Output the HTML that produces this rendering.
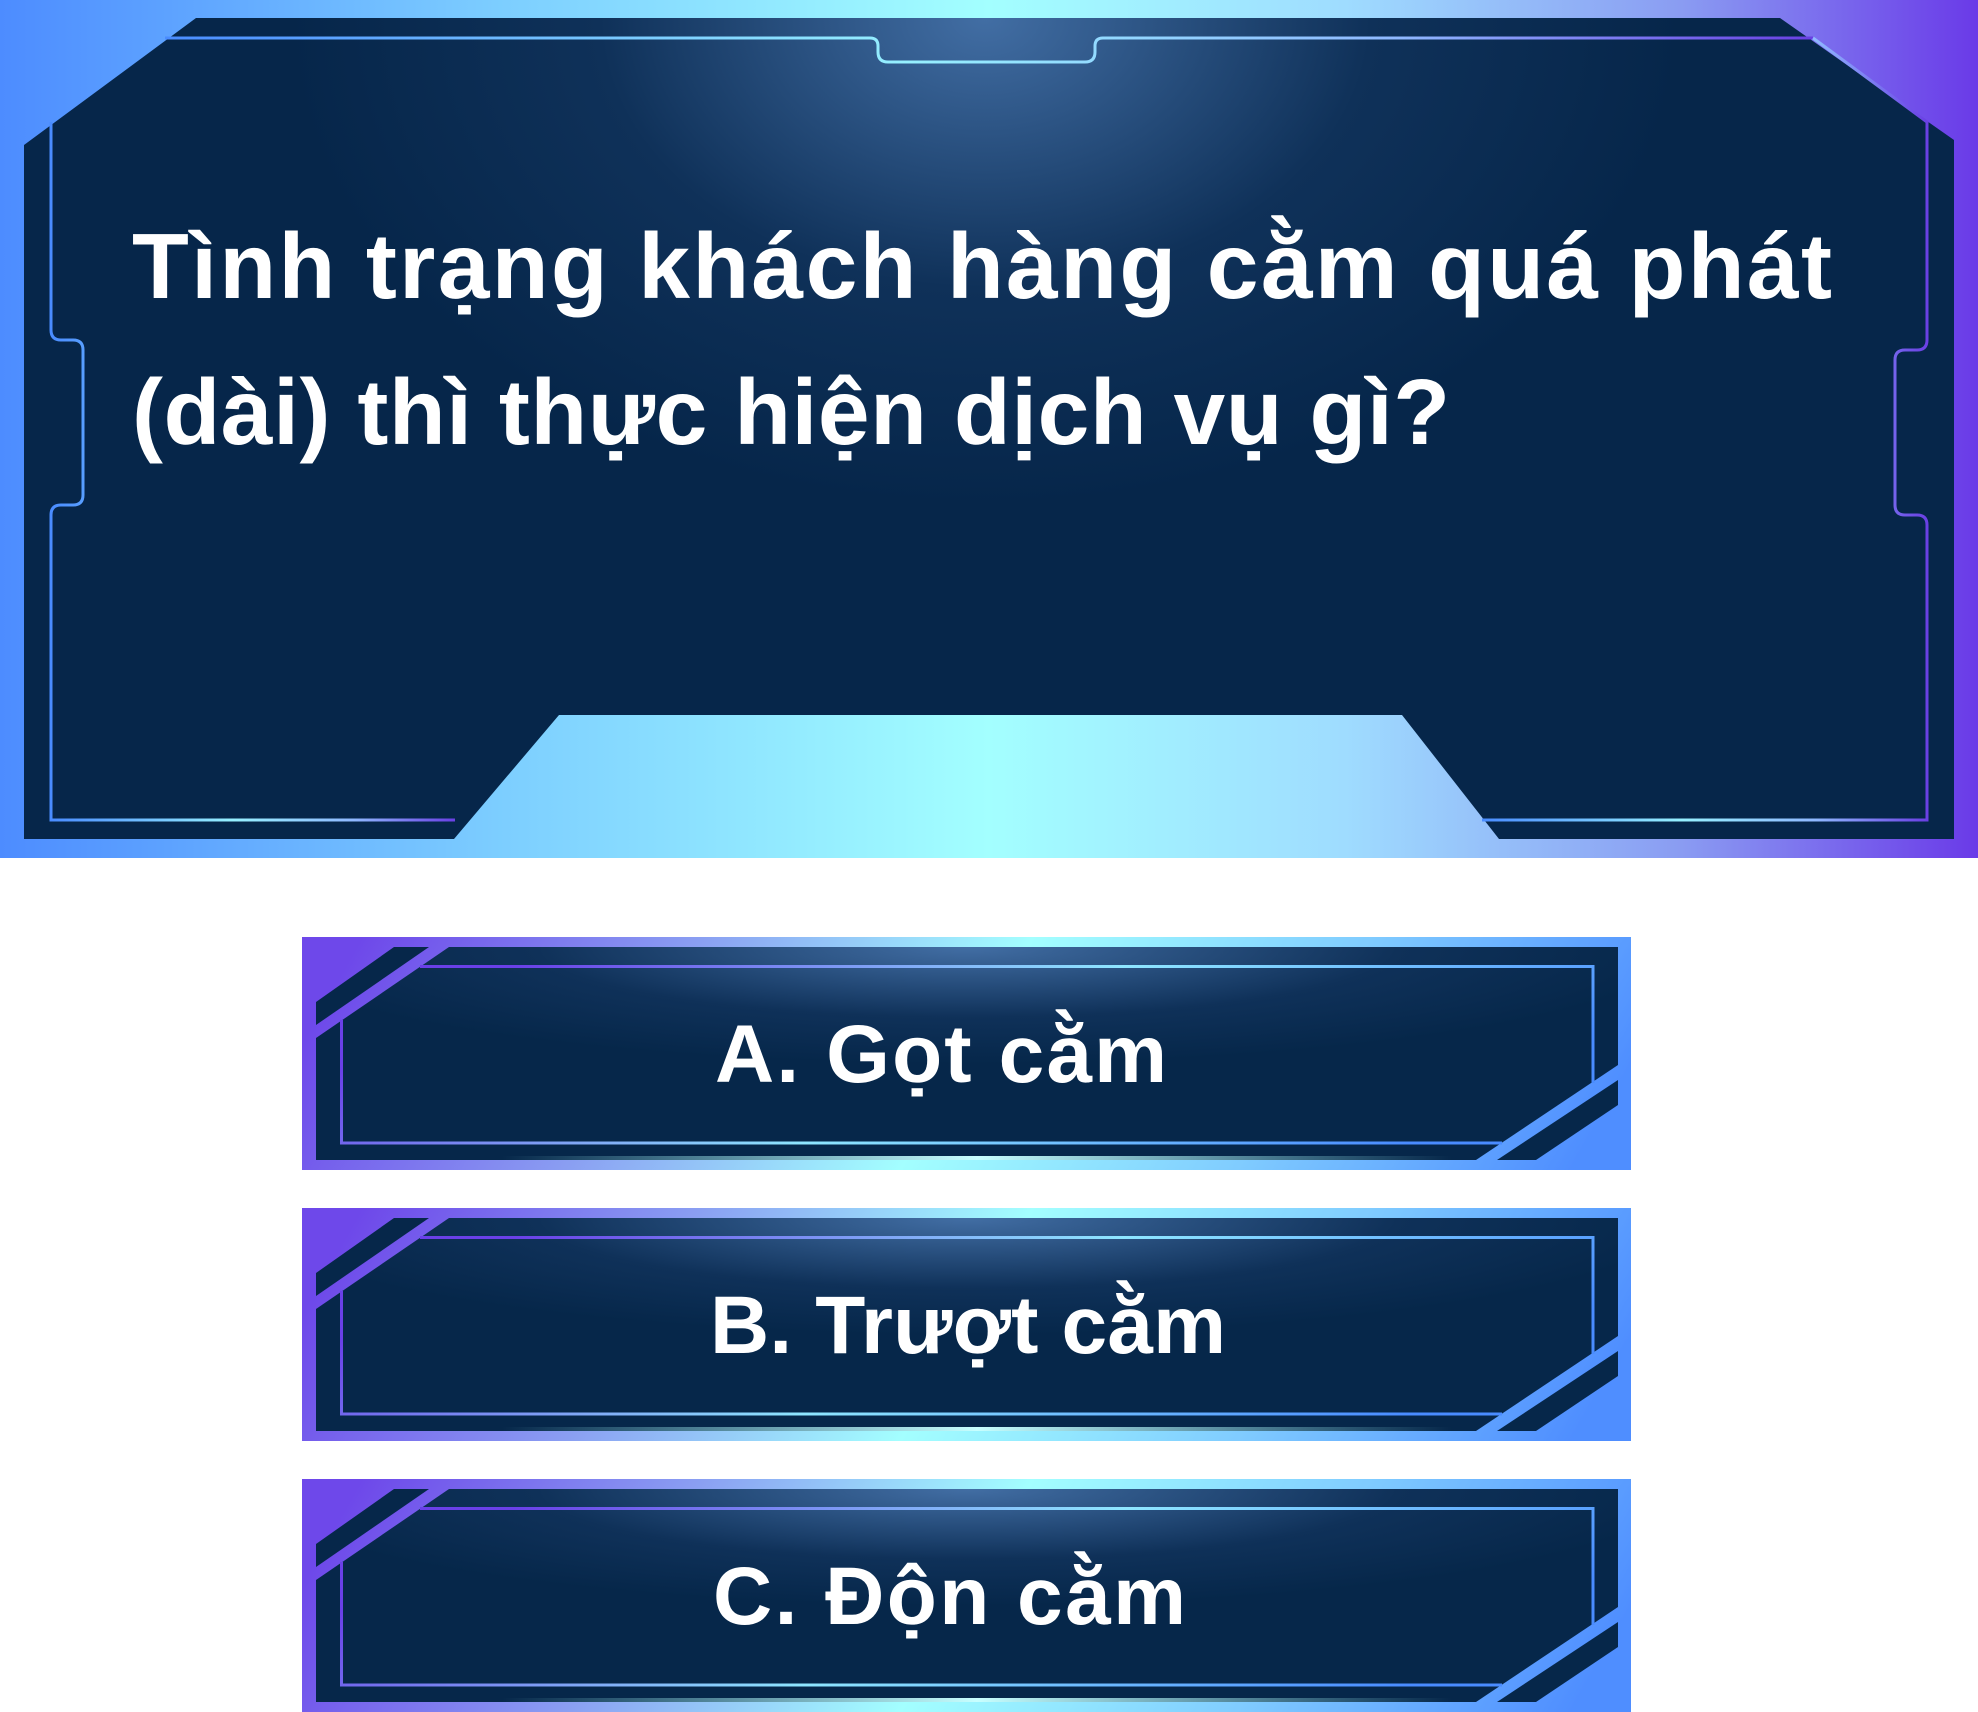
<!DOCTYPE html>
<html><head><meta charset="utf-8"><style>
html,body{margin:0;padding:0;background:#fff;width:1978px;height:1712px;overflow:hidden}
svg{display:block}
text{font-family:"Liberation Sans",sans-serif;font-weight:bold;fill:#fff}
</style></head><body>
<svg width="1978" height="1712" viewBox="0 0 1978 1712" xmlns="http://www.w3.org/2000/svg">
<defs>
<linearGradient id="topg" x1="0" y1="0" x2="1" y2="0">
<stop offset="0" stop-color="#4d8cff"/><stop offset="0.25" stop-color="#7ccdff"/>
<stop offset="0.5" stop-color="#a3ffff"/><stop offset="0.68" stop-color="#9fdcff"/>
<stop offset="0.85" stop-color="#8a9cf2"/><stop offset="1" stop-color="#6a3ae8"/>
</linearGradient>
<radialGradient id="qdark" cx="985" cy="18" r="700" gradientUnits="userSpaceOnUse" gradientTransform="translate(985 18) scale(1 0.7) translate(-985 -18)">
<stop offset="0" stop-color="#426ea4"/><stop offset="0.55" stop-color="#0f3159"/><stop offset="1" stop-color="#06264a"/>
</radialGradient>
<linearGradient id="qline" x1="0" y1="0" x2="1" y2="0">
<stop offset="0" stop-color="#4a8cff"/><stop offset="0.45" stop-color="#96f0ff"/>
<stop offset="0.75" stop-color="#8fb8ff"/><stop offset="1" stop-color="#6a40e4"/>
</linearGradient>
<linearGradient id="ag" x1="0" y1="0.45" x2="1" y2="0.55">
<stop offset="0" stop-color="#6e48ea"/><stop offset="0.25" stop-color="#8a9ef2"/>
<stop offset="0.5" stop-color="#a3ffff"/><stop offset="0.75" stop-color="#80ccff"/>
<stop offset="1" stop-color="#4f8eff"/>
</linearGradient>
<radialGradient id="adark" cx="0.5" cy="0" r="0.55">
<stop offset="0" stop-color="#426ea4"/><stop offset="0.6" stop-color="#0f3159"/><stop offset="1" stop-color="#06274a"/>
</radialGradient>
<linearGradient id="aline" x1="0" y1="0.4" x2="1" y2="0.6">
<stop offset="0" stop-color="#6a40e8"/><stop offset="0.5" stop-color="#8ee6ff"/><stop offset="1" stop-color="#4a8cff"/>
</linearGradient>
<linearGradient id="glow" x1="0" y1="0" x2="1" y2="0">
<stop offset="0" stop-color="#a3ffff" stop-opacity="0"/><stop offset="0.5" stop-color="#c8ffff"/><stop offset="1" stop-color="#a3ffff" stop-opacity="0"/>
</linearGradient>
<g id="box">
<rect x="0" y="0" width="1329" height="233" fill="url(#ag)"/>
<polygon points="92,10 127,10 14,88 14,65" fill="#06274a"/>
<polygon points="147,10 1316,10 1316,128 1174,223 14,223 14,101" fill="url(#adark)"/>
<polygon points="1316,143 1316,168 1234,223 1195,223" fill="#06274a"/>
<polyline points="118,29.5 1291,29.5 1291,146" fill="none" stroke="url(#aline)" stroke-width="3"/>
<polyline points="1200,206 39.5,206 39.5,83" fill="none" stroke="url(#aline)" stroke-width="3"/>
<rect x="200" y="219" width="950" height="4" fill="url(#glow)"/>
</g>
</defs>
<rect x="0" y="0" width="1978" height="858" fill="url(#topg)"/>
<polygon points="196,18 1780,18 1954,140 1954,839 1499,839 1402,715 559,715 454,839 24,839 24,145" fill="url(#qdark)"/>
<g fill="none" stroke="url(#qline)" stroke-width="3">
<path d="M165 38 H870 q8 0 8 8 v6 q0 10 10 10 H1085 q10 0 10 -10 v-6 q0 -8 8 -8 H1813"/>
<path d="M1813 38 L1927 122 V340 q0 10 -10 10 h-12 q-10 0 -10 10 V505 q0 10 10 10 h12 q10 0 10 10 V820 H1482"/>
<path d="M51 122 V330 q0 10 10 10 h12 q10 0 10 10 V495 q0 10 -10 10 h-12 q-10 0 -10 10 V820 H455"/>
</g>
<text x="132" y="298" font-size="93" textLength="1700" lengthAdjust="spacing">Tình trạng khách hàng cằm quá phát</text>
<text x="132" y="444" font-size="93" textLength="1318" lengthAdjust="spacing">(dài) thì thực hiện dịch vụ gì?</text>
<use href="#box" x="302" y="937"/>
<use href="#box" x="302" y="1208"/>
<use href="#box" x="302" y="1479"/>
<text x="715" y="1082" font-size="82" textLength="452" lengthAdjust="spacing">A. Gọt cằm</text>
<text x="710" y="1353" font-size="82" textLength="516" lengthAdjust="spacing">B. Trượt cằm</text>
<text x="713" y="1624" font-size="82" textLength="473" lengthAdjust="spacing">C. Độn cằm</text>
</svg>
</body></html>
